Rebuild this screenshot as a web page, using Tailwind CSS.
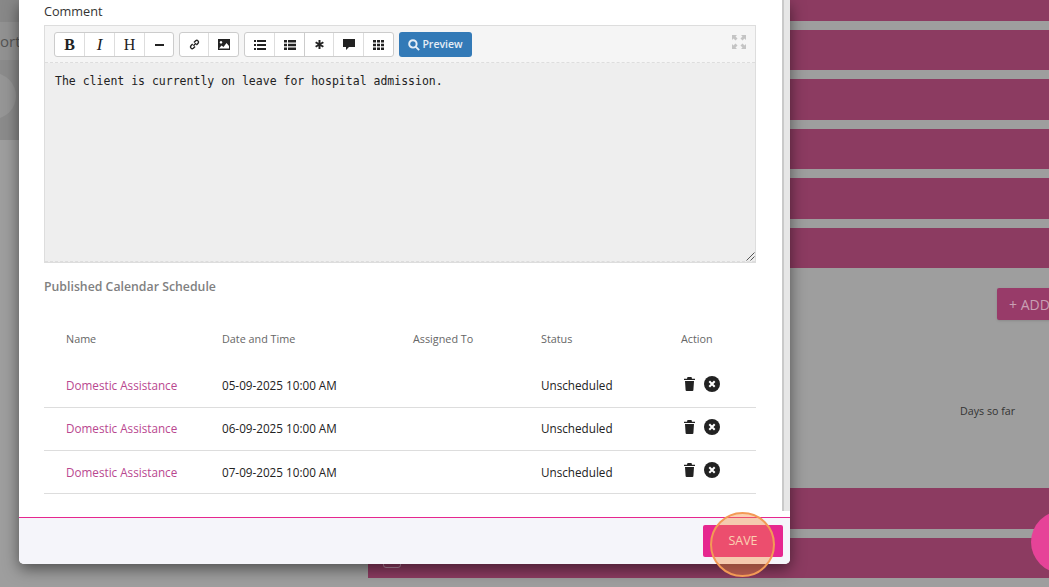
<!DOCTYPE html>
<html lang="en">
<head>
    <meta charset="UTF-8">
    <title>Comment</title>
    <script src="https://cdn.jsdelivr.net/npm/@tailwindcss/browser@4"></script>
</head>
<body class="h-[587px] w-[1049px] overflow-hidden bg-[#9e9e9e] font-['Open_Sans',sans-serif]">
    <div class="relative h-[587px] w-[1049px] overflow-hidden">
        <!-- page behind the modal -->
        <div class="flex h-full">
            <div class="w-[368px] shrink-0">
                <div class="h-[22px] bg-[#888888]"></div>
                <div class="flex h-[38px] items-center bg-[#929292]">
                    <span class="text-[15px] text-[#555555]">ort</span>
                </div>
                <div class="h-[80px] overflow-hidden bg-[#8b8b8b]">
                    <div class="ml-[-30px] mt-[13px] h-[46px] w-[46px] rounded-full bg-[#969696]"></div>
                </div>
            </div>
            <div class="relative flex-1">
                <div class="h-[21px] bg-[#8c3b61]"></div>
                <div class="mt-[9px] h-[40px] bg-[#8c3b61]"></div>
                <div class="mt-[9px] h-[41px] bg-[#8c3b61]"></div>
                <div class="mt-[9px] h-[40px] bg-[#8c3b61]"></div>
                <div class="mt-[9px] h-[41px] bg-[#8c3b61]"></div>
                <div class="mt-[9px] h-[40px] bg-[#8c3b61]"></div>
                <div class="flex h-[220px] flex-col">
                    <div class="ml-auto mt-[20px] flex h-[32px] w-[70px] -mr-[18px] items-center rounded-[2px] bg-[#983b69] pl-[12px] text-[14px] text-[#c9a0b4] shadow-sm">+ ADD</div>
                    <div class="ml-[592px] mt-[83px] text-[10.7px] text-[#333333]">Days so far</div>
                </div>
                <div class="h-[41px] bg-[#8c3b61]"></div>
                <div class="mt-[9px] h-[40px] bg-[#8c3b61]">
                    <div class="ml-[15px] mt-[14px] inline-block h-[16px] w-[18px] rounded-[3px] border border-[#b98aa2]"></div>
                </div>
            </div>
        </div>

        <!-- modal -->
        <div class="absolute left-[19px] top-0 flex h-[564px] w-[771px] flex-col rounded-b-[5px] bg-white shadow-[0_5px_15px_rgba(0,0,0,0.5)]">
            <div class="flex min-h-0 flex-1">
                <div class="min-w-0 flex-1 pl-[25px] pr-[25px]">
                    <div class="flex h-[25px] items-start text-[12.7px] font-medium leading-[23px] text-[#333333]">Comment</div>

                    <!-- markdown editor -->
                    <div class="relative w-[712px] border border-[#dddddd]">
                        <div class="flex h-[37px] items-start gap-[5px] border-b border-dashed border-[#dddddd] bg-[#f5f5f5] pl-[9px] pt-[6px]">
                            <div class="flex h-[25px] overflow-hidden rounded-[3px] border border-[#cccccc] bg-white text-[#222222]">
                                <div class="flex w-[30px] items-center justify-center border-r border-[#dddddd] font-['Liberation_Serif',serif] text-[16px] font-bold">B</div>
                                <div class="flex w-[30px] items-center justify-center border-r border-[#dddddd] font-['Liberation_Serif',serif] text-[17px] italic">I</div>
                                <div class="flex w-[30px] items-center justify-center border-r border-[#dddddd] font-['Liberation_Serif',serif] text-[16px]">H</div>
                                <div class="flex w-[28px] items-center justify-center"><span class="h-[2px] w-[9px] bg-[#222222]"></span></div>
                            </div>
                            <div class="flex h-[25px] overflow-hidden rounded-[3px] border border-[#cccccc] bg-white">
                                <div class="flex w-[29px] items-center justify-center border-r border-[#dddddd]">
                                    <svg width="13" height="13" viewBox="0 0 12 12" fill="none" stroke="#222" stroke-width="1.3"><path d="M5 7.200 7.300 4.800M4.300 5.600 2.700 7.200a1.600 1.600 0 0 0 2.200 2.300l1.600-1.600M7.700 6.400l1.600-1.600a1.600 1.600 0 0 0-2.200-2.300L5.500 4.100"/></svg>
                                </div>
                                <div class="flex w-[29px] items-center justify-center">
                                    <svg width="12" height="11" viewBox="0 0 12 11"><path fill="#222" fill-rule="evenodd" d="M0 0h12v11H0zM1 9.500h10V7L8.500 4 5.500 8 3.500 6.500zM3 2a1.300 1.300 0 1 0 .01 0z"/></svg>
                                </div>
                            </div>
                            <div class="flex h-[25px] overflow-hidden rounded-[3px] border border-[#cccccc] bg-white">
                                <div class="flex w-[30px] items-center justify-center border-r border-[#dddddd]">
                                    <svg width="12" height="10" viewBox="0 0 12 10" fill="#222"><path d="M0 0h2v2H0zM3 0h9v2H3zM0 4h2v2H0zM3 4h9v2H3zM0 8h2v2H0zM3 8h9v2H3z"/></svg>
                                </div>
                                <div class="flex w-[30px] items-center justify-center border-r border-[#cccccc]">
                                    <svg width="12" height="10" viewBox="0 0 12 10" fill="#222"><path d="M0 0h3v2.600H0zM4 0h8v2.600H4zM0 3.700h3v2.600H0zM4 3.700h8v2.600H4zM0 7.400h3V10H0zM4 7.400h8V10H4z"/></svg>
                                </div>
                                <div class="flex w-[29px] items-center justify-center border-r border-[#dddddd]">
                                    <svg width="9" height="9" viewBox="0 0 10 10" stroke="#222" stroke-width="2.200"><path d="M5 0v10M.7 2.500l8.600 5M.7 7.500l8.600-5"/></svg>
                                </div>
                                <div class="flex w-[30px] items-center justify-center border-r border-[#dddddd]">
                                    <svg width="12" height="11" viewBox="0 0 12 11" fill="#222"><path d="M0 0h12v8H6L3 11V8H0z"/></svg>
                                </div>
                                <div class="flex w-[29px] items-center justify-center">
                                    <svg width="11" height="10" viewBox="0 0 11 10" fill="#222"><path d="M0 0h3v2.600H0zM4 0h3v2.600H4zM8 0h3v2.600H8zM0 3.700h3v2.600H0zM4 3.700h3v2.600H4zM8 3.700h3v2.600H8zM0 7.400h3V10H0zM4 7.400h3V10H4zM8 7.400h3V10H8z"/></svg>
                                </div>
                            </div>
                            <div class="flex h-[25px] w-[73px] items-center justify-center gap-[2px] rounded-[3px] bg-[#337ab7] text-[10.5px] font-semibold text-[#e6eef6]">
                                <svg width="12" height="12" viewBox="0 0 11 11" fill="none" stroke="#e6eef6" stroke-width="1.800"><circle cx="4.500" cy="4.500" r="3.400"/><path d="M7 7l3.200 3.200"/></svg>
                                <span>Preview</span>
                            </div>
                            <svg class="absolute right-[9px] top-[9px]" width="14" height="14" viewBox="0 0 14 14" fill="#c4c4c4"><path d="M0 0h5L3.500 1.500 5.500 3.500 3.500 5.500 1.500 3.500 0 5zM14 0v5L12.500 3.500 10.500 5.500 8.500 3.500 10.500 1.500 9 0zM0 14V9l1.500 1.500 2-2 2 2-2 2L5 14zM14 14H9l1.500-1.500-2-2 2-2 2 2L14 9z"/></svg>
                        </div>
                        <div class="relative h-[199px] border-b border-dashed border-[#dddddd] bg-[#eeeeee] px-[10px] pt-[10px] font-['DejaVu_Sans_Mono',monospace] text-[11.5px] leading-[17px] text-[#222222]">
                            The client is currently on leave for hospital admission.
                            <svg class="absolute bottom-0 right-0" width="9" height="9" viewBox="0 0 9 9" stroke="#555" fill="none"><path d="M0.500 8.500 8.500 0.500M4.500 8.500 8.500 4.500"/></svg>
                        </div>
                    </div>

                    <div class="mt-[15px] h-[18px] text-[12.3px] font-semibold leading-[18px] text-[#808080]">Published Calendar Schedule</div>

                    <table class="mt-[20px] w-[712px] table-fixed text-left text-[11.7px]">
                        <colgroup>
                            <col class="w-[156px]">
                            <col class="w-[191px]">
                            <col class="w-[128px]">
                            <col class="w-[140px]">
                            <col class="w-[97px]">
                        </colgroup>
                        <thead>
                            <tr class="h-[47px] text-[10.8px] text-[#666666]">
                                <th class="pl-[22px] font-normal">Name</th>
                                <th class="pl-[22px] font-normal">Date and Time</th>
                                <th class="pl-[22px] font-normal">Assigned To</th>
                                <th class="pl-[22px] font-normal">Status</th>
                                <th class="pl-[22px] font-normal">Action</th>
                            </tr>
                        </thead>
                        <tbody class="text-[#222222]">
                            <tr class="h-[44px] border-b border-[#dddddd]">
                                <td class="pl-[22px] pt-[2px] text-[#b9478f]">Domestic Assistance</td>
                                <td class="pl-[22px] pt-[2px]">05-09-2025 10:00 AM</td>
                                <td></td>
                                <td class="pl-[22px] pt-[2px]">Unscheduled</td>
                                <td class="pl-[25px]">
                                    <div class="flex items-center gap-[9px] pb-[1px]">
                                        <svg width="11" height="14" viewBox="0 0 11 14" fill="#222"><path d="M0 1.800h11v1.200H0zM3.500 0h4L8 1.800H3zM1 4h9l-.6 9a1 1 0 0 1-1 1H2.600a1 1 0 0 1-1-1z"/></svg>
                                        <svg width="16" height="16" viewBox="0 0 16 16"><circle cx="8" cy="8" r="8" fill="#222"/><path d="M5.300 5.300l5.400 5.400M10.700 5.300l-5.400 5.400" stroke="#fff" stroke-width="2"/></svg>
                                    </div>
                                </td>
                            </tr>
                            <tr class="h-[43px] border-b border-[#dddddd]">
                                <td class="pl-[22px] text-[#b9478f]">Domestic Assistance</td>
                                <td class="pl-[22px]">06-09-2025 10:00 AM</td>
                                <td></td>
                                <td class="pl-[22px]">Unscheduled</td>
                                <td class="pl-[25px]">
                                    <div class="flex items-center gap-[9px] pb-[3px]">
                                        <svg width="11" height="14" viewBox="0 0 11 14" fill="#222"><path d="M0 1.800h11v1.200H0zM3.500 0h4L8 1.800H3zM1 4h9l-.6 9a1 1 0 0 1-1 1H2.600a1 1 0 0 1-1-1z"/></svg>
                                        <svg width="16" height="16" viewBox="0 0 16 16"><circle cx="8" cy="8" r="8" fill="#222"/><path d="M5.300 5.300l5.400 5.400M10.700 5.300l-5.400 5.400" stroke="#fff" stroke-width="2"/></svg>
                                    </div>
                                </td>
                            </tr>
                            <tr class="h-[43px] border-b border-[#dddddd]">
                                <td class="pl-[22px] pt-[2px] text-[#b9478f]">Domestic Assistance</td>
                                <td class="pl-[22px] pt-[2px]">07-09-2025 10:00 AM</td>
                                <td></td>
                                <td class="pl-[22px] pt-[2px]">Unscheduled</td>
                                <td class="pl-[25px]">
                                    <div class="flex items-center gap-[9px] pb-[3px]">
                                        <svg width="11" height="14" viewBox="0 0 11 14" fill="#222"><path d="M0 1.800h11v1.200H0zM3.500 0h4L8 1.800H3zM1 4h9l-.6 9a1 1 0 0 1-1 1H2.600a1 1 0 0 1-1-1z"/></svg>
                                        <svg width="16" height="16" viewBox="0 0 16 16"><circle cx="8" cy="8" r="8" fill="#222"/><path d="M5.300 5.300l5.400 5.400M10.700 5.300l-5.400 5.400" stroke="#fff" stroke-width="2"/></svg>
                                    </div>
                                </td>
                            </tr>
                        </tbody>
                    </table>
                </div>
                <!-- scrollbar -->
                <div class="mb-[6px] w-[8px] shrink-0 border-l-[2px] border-[#c9c9c9] bg-[#e6e6e6]"></div>
            </div>
            <div class="h-px bg-[#e6278f]"></div>
            <div class="flex h-[46px] items-start justify-end rounded-b-[5px] bg-[#f5f5fa] pr-[7px] pt-[7px]">
                <div class="flex h-[32px] w-[80px] items-center justify-center rounded-[2px] bg-[#e6278f] text-[12.5px] text-white">SAVE</div>
            </div>
        </div>

        <!-- click highlight and floating button -->
        <div class="absolute left-[710px] top-[512px] h-[65px] w-[65px] rounded-full border-[2px] border-[#f39a55] bg-[#f58a3c]/40"></div>
        <div class="absolute left-[1031px] top-[511px] h-[62px] w-[62px] rounded-full bg-[#e64398]"></div>
    </div>
</body>
</html>
